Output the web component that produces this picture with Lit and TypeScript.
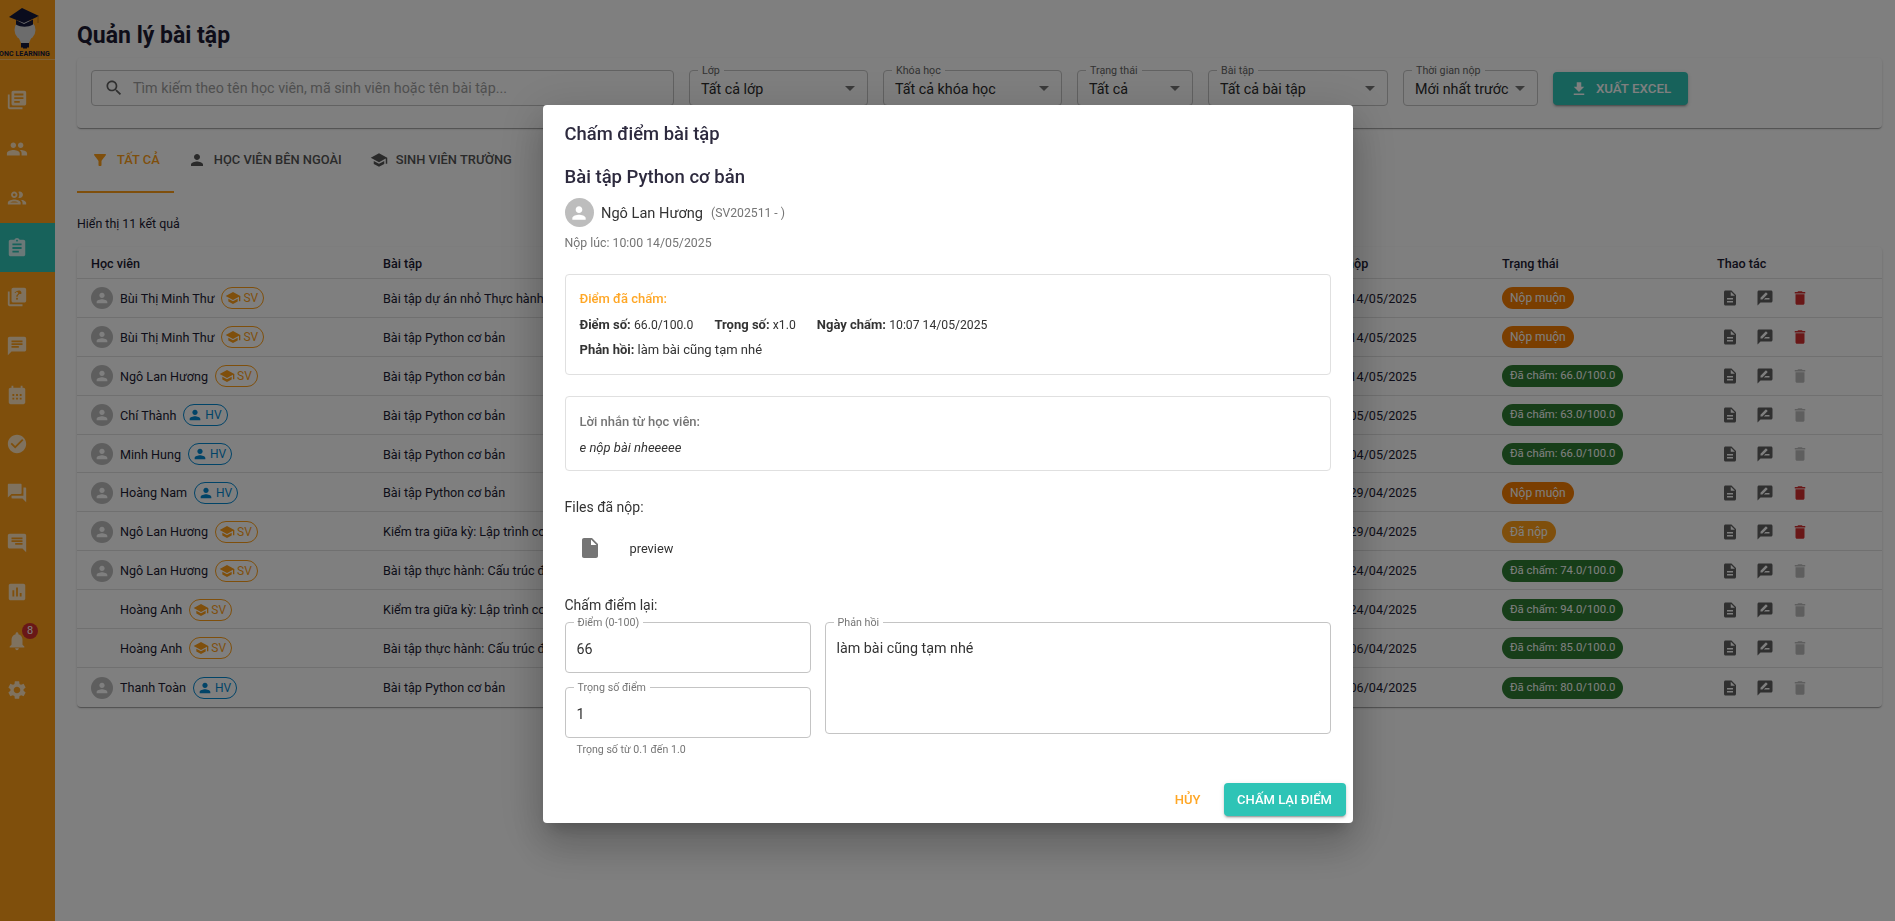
import { LitElement, css, html, svg } from "lit";
import { customElement } from "lit/decorators.js";
import { classMap } from "lit/directives/class-map.js";

const P = {
  books: "M4 6H2v14c0 1.1.9 2 2 2h14v-2H4V6zm16-4H8c-1.1 0-2 .9-2 2v12c0 1.1.9 2 2 2h12c1.1 0 2-.9 2-2V4c0-1.1-.9-2-2-2zm-1 9H9V9h10v2zm-4 4H9v-2h6v2zm4-8H9V5h10v2z",
  people: "M16 11c1.66 0 2.99-1.34 2.99-3S17.66 5 16 5c-1.66 0-3 1.34-3 3s1.34 3 3 3zm-8 0c1.66 0 2.99-1.34 2.99-3S9.66 5 8 5C6.34 5 5 6.34 5 8s1.34 3 3 3zm0 2c-2.33 0-7 1.17-7 3.5V19h14v-2.5c0-2.33-4.67-3.5-7-3.5zm8 0c-.29 0-.62.02-.97.05 1.16.84 1.97 1.97 1.97 3.45V19h6v-2.5c0-2.33-4.67-3.5-7-3.5z",
  peopleOutline: "M9 13.75c-2.34 0-7 1.17-7 3.5V19h14v-1.75c0-2.33-4.66-3.5-7-3.5zM4.34 17c.84-.58 2.87-1.25 4.66-1.25s3.82.67 4.66 1.25H4.34zM9 12c1.93 0 3.5-1.57 3.5-3.5S10.93 5 9 5 5.5 6.57 5.5 8.5 7.07 12 9 12zm0-5c.83 0 1.5.67 1.5 1.5S9.83 10 9 10s-1.5-.67-1.5-1.5S8.17 7 9 7zm7.04 6.81c1.16.84 1.96 1.96 1.96 3.44V19h4v-1.75c0-2.02-3.5-3.17-5.96-3.44zM15 12c1.93 0 3.5-1.57 3.5-3.5S16.93 5 15 5c-.54 0-1.04.13-1.5.35.63.89 1 1.98 1 3.15s-.37 2.26-1 3.15c.46.22.96.35 1.5.35z",
  assignment: "M19 3h-4.18C14.4 1.84 13.3 1 12 1c-1.3 0-2.4.84-2.82 2H5c-1.1 0-2 .9-2 2v14c0 1.1.9 2 2 2h14c1.1 0 2-.9 2-2V5c0-1.1-.9-2-2-2zm-7 0c.55 0 1 .45 1 1s-.45 1-1 1-1-.45-1-1 .45-1 1-1zm2 14H7v-2h7v2zm3-4H7v-2h10v2zm0-4H7V7h10v2z",
  quiz: "M4 6H2v14c0 1.1.9 2 2 2h14v-2H4V6zm16-4H8c-1.1 0-2 .9-2 2v12c0 1.1.9 2 2 2h12c1.1 0 2-.9 2-2V4c0-1.1-.9-2-2-2zm-7.99 13c-.59 0-1.05-.47-1.05-1.05 0-.59.47-1.04 1.05-1.04.59 0 1.04.45 1.04 1.04 0 .58-.44 1.05-1.04 1.05zm2.5-6.17c-.63.93-1.23 1.21-1.56 1.81-.13.24-.18.4-.18 1.18h-1.52c0-.41-.06-1.08.26-1.65.41-.73 1.18-1.16 1.63-1.8.48-.68.21-1.94-1.14-1.94-.88 0-1.32.67-1.5 1.23l-1.37-.57C11.51 5.96 12.52 5 13.99 5c1.23 0 2.08.56 2.51 1.26.37.61.58 1.73.01 2.57z",
  chat: "M20 2H4c-1.1 0-1.99.9-1.99 2L2 22l4-4h14c1.1 0 2-.9 2-2V4c0-1.1-.9-2-2-2zM6 9h12v2H6V9zm8 5H6v-2h8v2zm4-6H6V6h12v2z",
  calendar: "M19 4h-1V2h-2v2H8V2H6v2H5c-1.1 0-2 .9-2 2v14c0 1.1.9 2 2 2h14c1.1 0 2-.9 2-2V6c0-1.1-.9-2-2-2zM9 17H7v-2h2v2zm0-4H7v-2h2v2zm4 4h-2v-2h2v2zm0-4h-2v-2h2v2zm4 4h-2v-2h2v2zm0-4h-2v-2h2v2z",
  check: "M12 2C6.48 2 2 6.48 2 12s4.48 10 10 10 10-4.48 10-10S17.52 2 12 2zm-2 15l-5-5 1.41-1.41L10 14.17l7.59-7.59L19 8l-9 9z",
  forum: "M21 6h-2v9H6v2c0 .55.45 1 1 1h11l4 4V7c0-.55-.45-1-1-1zm-4 6V3c0-.55-.45-1-1-1H3c-.55 0-1 .45-1 1v14l4-4h10c.55 0 1-.45 1-1z",
  chart: "M19 3H5c-1.1 0-2 .9-2 2v14c0 1.1.9 2 2 2h14c1.1 0 2-.9 2-2V5c0-1.1-.9-2-2-2zM9 17H7v-7h2v7zm4 0h-2V7h2v10zm4 0h-2v-4h2v4z",
  bell: "M12 22c1.1 0 2-.9 2-2h-4c0 1.1.89 2 2 2zm6-6v-5c0-3.07-1.64-5.64-4.5-6.32V4c0-.83-.67-1.5-1.5-1.5s-1.5.67-1.5 1.5v.68C7.63 5.36 6 7.92 6 11v5l-2 2v1h16v-1l-2-2z",
  settings: "M19.14 12.94c.04-.3.06-.61.06-.94 0-.32-.02-.64-.07-.94l2.03-1.58c.18-.14.23-.41.12-.61l-1.92-3.32c-.12-.22-.37-.29-.59-.22l-2.39.96c-.5-.38-1.03-.7-1.62-.94l-.36-2.54c-.04-.24-.24-.41-.48-.41h-3.84c-.24 0-.43.17-.47.41l-.36 2.54c-.59.24-1.13.57-1.62.94l-2.39-.96c-.22-.08-.47 0-.59.22L2.74 8.87c-.12.21-.08.47.12.61l2.03 1.58c-.05.3-.09.63-.09.94s.02.64.07.94l-2.03 1.58c-.18.14-.23.41-.12.61l1.92 3.32c.12.22.37.29.59.22l2.39-.96c.5.38 1.03.7 1.62.94l.36 2.54c.05.24.24.41.48.41h3.84c.24 0 .44-.17.47-.41l.36-2.54c.59-.24 1.13-.56 1.62-.94l2.39.96c.22.08.47 0 .59-.22l1.92-3.32c.12-.22.07-.47-.12-.61l-2.01-1.58zM12 15.6c-1.98 0-3.6-1.62-3.6-3.6s1.62-3.6 3.6-3.6 3.6 1.62 3.6 3.6-1.62 3.6-3.6 3.6z",
  search: "M15.5 14h-.79l-.28-.27C15.41 12.59 16 11.11 16 9.5 16 5.91 13.09 3 9.5 3S3 5.91 3 9.5 5.91 16 9.5 16c1.61 0 3.09-.59 4.23-1.57l.27.28v.79l5 4.99L20.49 19l-4.99-5zm-6 0C7.01 14 5 11.99 5 9.5S7.01 5 9.5 5 14 7.01 14 9.5 11.99 14 9.5 14z",
  filter: "M4.25 5.61C6.27 8.2 10 13 10 13v6c0 .55.45 1 1 1h2c.55 0 1-.45 1-1v-6s3.72-4.8 5.74-7.39c.51-.66.04-1.61-.79-1.61H5.04c-.83 0-1.3.95-.79 1.61z",
  person: "M12 12c2.21 0 4-1.79 4-4s-1.79-4-4-4-4 1.79-4 4 1.79 4 4 4zm0 2c-2.67 0-8 1.34-8 4v2h16v-2c0-2.66-5.33-4-8-4z",
  school: "M5 13.18v4L12 21l7-3.82v-4L12 17l-7-3.82zM12 3L1 9l11 6 9-4.91V17h2V9L12 3z",
  download: "M5 20h14v-2H5v2zM19 9h-4V3H9v6H5l7 7 7-7z",
  description: "M14 2H6c-1.1 0-1.99.9-1.99 2L4 20c0 1.1.89 2 2 2h12c1.1 0 2-.9 2-2V8l-6-6zm2 16H8v-2h8v2zm0-4H8v-2h8v2zm-3-5V3.5L18.5 9H13z",
  file: "M6 2c-1.1 0-1.99.9-1.99 2L4 20c0 1.1.89 2 2 2h12c1.1 0 2-.9 2-2V8l-6-6H6zm7 7V3.5L18.5 9H13z",
  review: "M20 2H4c-1.1 0-1.99.9-1.99 2L2 22l4-4h14c1.1 0 2-.9 2-2V4c0-1.1-.9-2-2-2zM6 14v-2.47l6.88-6.88c.2-.2.51-.2.71 0l1.77 1.77c.2.2.2.51 0 .71L8.47 14H6zm12 0h-7.5l2-2H18v2z",
  trash: "M6 19c0 1.1.9 2 2 2h8c1.1 0 2-.9 2-2V7H6v12zM19 4h-3.5l-1-1h-5l-1 1H5v2h14V4z",
  arrow: "M7 10l5 5 5-5z",
};

const icon = (d: string, size = 24, flip = false) => html`<svg
  class=${flip ? "flip" : ""}
  width=${size}
  height=${size}
  viewBox="0 0 24 24"
  fill="currentColor"
>${svg`<path d=${d}></path>`}</svg>`;

const NAV = [
  { d: P.books },
  { d: P.people },
  { d: P.peopleOutline },
  { d: P.assignment, active: true },
  { d: P.quiz },
  { d: P.chat },
  { d: P.calendar },
  { d: P.check },
  { d: P.forum },
  { d: P.chat, flip: true },
  { d: P.chart },
  { d: P.bell, badge: "8" },
  { d: P.settings },
];

const FILTERS = [
  { label: "Lớp", value: "Tất cả lớp", width: 179 },
  { label: "Khóa học", value: "Tất cả khóa học", width: 179 },
  { label: "Trạng thái", value: "Tất cả", width: 116 },
  { label: "Bài tập", value: "Tất cả bài tập", width: 180 },
  { label: "Thời gian nộp", value: "Mới nhất trước", width: 135 },
];

const TABS = [
  { d: P.filter, label: "Tất cả", active: true },
  { d: P.person, label: "Học viên bên ngoài" },
  { d: P.school, label: "Sinh viên trường" },
];

const PY = "Bài tập Python cơ bản";
const MID = "Kiểm tra giữa kỳ: Lập trình cơ bản";
const PRAC = "Bài tập thực hành: Cấu trúc điều khiển";
const LATE = { text: "Nộp muộn", kind: "late" };
const graded = (n: string) => ({ text: `Đã chấm: ${n}/100.0`, kind: "graded" });

const ROWS = [
  { name: "Bùi Thị Minh Thư", type: "SV", task: "Bài tập dự án nhỏ Thực hành Python", date: "10:20 14/05/2025", status: LATE, del: true },
  { name: "Bùi Thị Minh Thư", type: "SV", task: PY, date: "10:12 14/05/2025", status: LATE, del: true },
  { name: "Ngô Lan Hương", type: "SV", task: PY, date: "10:00 14/05/2025", status: graded("66.0") },
  { name: "Chí Thành", type: "HV", task: PY, date: "09:41 05/05/2025", status: graded("63.0") },
  { name: "Minh Hung", type: "HV", task: PY, date: "16:05 04/05/2025", status: graded("66.0") },
  { name: "Hoàng Nam", type: "HV", task: PY, date: "20:30 29/04/2025", status: LATE, del: true },
  { name: "Ngô Lan Hương", type: "SV", task: MID, date: "14:15 29/04/2025", status: { text: "Đã nộp", kind: "sent" }, del: true },
  { name: "Ngô Lan Hương", type: "SV", task: PRAC, date: "08:47 24/04/2025", status: graded("74.0") },
  { name: "Hoàng Anh", type: "SV", task: MID, date: "08:22 24/04/2025", status: graded("94.0"), noAvatar: true },
  { name: "Hoàng Anh", type: "SV", task: PRAC, date: "15:10 06/04/2025", status: graded("85.0"), noAvatar: true },
  { name: "Thanh Toàn", type: "HV", task: PY, date: "11:36 06/04/2025", status: graded("80.0") },
];

@customElement("app-root")
export class AppRoot extends LitElement {
  static styles = css`
    * {
      box-sizing: border-box;
      margin: 0;
      padding: 0;
    }

    :host {
      display: block;
      height: 100vh;
      overflow: hidden;
      font-family: Roboto, "Noto Sans", sans-serif;
      color: #1c1b33;
      background: #fff;
    }

    svg {
      display: block;
      flex: none;
    }

    .flip {
      transform: scaleX(-1);
    }

    .page {
      display: flex;
      height: 100vh;
    }

    /* sidebar */
    .sidebar {
      width: 55px;
      flex: none;
      background: #ff9f18;
      overflow: hidden;
    }

    .logo {
      height: 60px;
      border-bottom: 1px solid rgba(255, 255, 255, 0.35);
      padding-top: 3px;
    }

    .logo-text {
      font-size: 7px;
      line-height: 10px;
      font-weight: 700;
      letter-spacing: 0.1px;
      white-space: nowrap;
      margin-left: -1px;
      color: #14183a;
    }

    .nav {
      padding-top: 15.4px;
    }

    .nav-item {
      position: relative;
      height: 49.2px;
      padding-left: 6px;
      display: flex;
      align-items: center;
      color: rgba(255, 255, 255, 0.72);
    }

    .nav-item.active {
      background: #2ec4b6;
      color: rgba(255, 255, 255, 0.8);
    }

    .badge {
      position: absolute;
      left: 22px;
      top: 7px;
      width: 16px;
      height: 16px;
      border-radius: 50%;
      background: #d32f2f;
      color: #fff;
      font-size: 11px;
      line-height: 16px;
      text-align: center;
    }

    /* main */
    .main {
      flex: 1;
      min-width: 0;
      padding: 14px 13px 0 22px;
    }

    h1 {
      font-size: 23px;
      line-height: 44px;
      font-weight: 700;
    }

    .filter-card {
      display: flex;
      gap: 15px;
      height: 70px;
      padding: 12px 14px;
      border-radius: 4px;
      box-shadow: 0 2px 1px -1px rgba(0, 0, 0, 0.2), 0 1px 1px rgba(0, 0, 0, 0.14), 0 1px 3px rgba(0, 0, 0, 0.12);
    }

    .search {
      width: 583px;
      height: 36px;
      display: flex;
      align-items: center;
      gap: 9px;
      padding-left: 12px;
      border: 1px solid #c4c4c4;
      border-radius: 4px;
      color: #616161;
    }

    .search span {
      font-size: 14.3px;
      color: #9e9e9e;
      white-space: nowrap;
    }

    .select {
      position: relative;
      height: 36px;
      display: flex;
      align-items: center;
      justify-content: space-between;
      padding: 2px 5px 0 11px;
      border: 1px solid #c4c4c4;
      border-radius: 4px;
      font-size: 14.3px;
      color: #2b2b2b;
      white-space: nowrap;
    }

    .select label {
      position: absolute;
      left: 8px;
      top: -7px;
      padding: 0 4px;
      background: #fff;
      font-size: 10.7px;
      line-height: 13px;
      color: #666;
    }

    .select svg {
      color: #757575;
      margin-top: -2px;
    }

    .export {
      width: 135px;
      height: 33px;
      margin-top: 2px;
      display: flex;
      align-items: center;
      justify-content: center;
      gap: 8px;
      border-radius: 4px;
      background: #2ec4b6;
      color: #fff;
      font-size: 13.3px;
      font-weight: 500;
      box-shadow: 0 3px 1px -2px rgba(0, 0, 0, 0.2), 0 2px 2px rgba(0, 0, 0, 0.14), 0 1px 5px rgba(0, 0, 0, 0.12);
    }

    .tabs {
      display: flex;
      margin-top: 8px;
    }

    .tab {
      height: 57px;
      display: flex;
      align-items: flex-start;
      gap: 8px;
      padding: 14px 14px 0;
      font-size: 12.9px;
      line-height: 20px;
      font-weight: 500;
      text-transform: uppercase;
      color: #555;
      white-space: nowrap;
    }

    .tab svg {
      margin-top: 1px;
    }

    .tab.active {
      color: #ff9f18;
      border-bottom: 2px solid #ff9f18;
    }

    .count {
      margin-top: 21px;
      font-size: 12.4px;
      line-height: 20px;
    }

    .table {
      margin-top: 13px;
      border-radius: 4px;
      box-shadow: 0 2px 1px -1px rgba(0, 0, 0, 0.2), 0 1px 1px rgba(0, 0, 0, 0.14), 0 1px 3px rgba(0, 0, 0, 0.12);
      font-size: 12.6px;
      overflow: hidden;
    }

    .row {
      display: grid;
      grid-template-columns: 292px 932px 187px 215px 1fr;
      align-items: center;
      height: 38.9px;
      padding: 1px 0 0 14px;
      border-bottom: 1px solid #e0e0e0;
      white-space: nowrap;
    }

    .row.head {
      height: 32px;
      padding-top: 2px;
      font-weight: 500;
    }

    .row:last-child {
      border-bottom: 0;
    }

    .student {
      display: flex;
      align-items: center;
    }

    .avatar {
      width: 22px;
      height: 22px;
      border-radius: 50%;
      background: #bdbdbd;
      color: #fff;
      display: flex;
      align-items: center;
      justify-content: center;
      flex: none;
    }

    .avatar.none {
      background: transparent;
    }

    .student-name {
      margin-left: 7px;
    }

    .pill {
      display: flex;
      align-items: center;
      gap: 2px;
      height: 22px;
      margin-left: 7px;
      padding: 0 5px 0 3px;
      border: 1px solid;
      border-radius: 11px;
      font-size: 12px;
    }

    .pill.SV {
      color: #ff9f18;
    }

    .pill.HV {
      color: #0288d1;
    }

    .status {
      display: inline-block;
      height: 22px;
      padding: 0 8px;
      border-radius: 11px;
      font-size: 12px;
      line-height: 22px;
      color: #fff;
    }

    .status.late {
      background: #f57c00;
    }

    .status.graded {
      background: #2e7d32;
      font-size: 11.3px;
    }

    .status.sent {
      background: #ff9f18;
    }

    .actions {
      display: flex;
      gap: 17px;
      padding-left: 4px;
      color: #616161;
    }

    .actions .del {
      color: #d32f2f;
    }

    .actions .off {
      color: #bdbdbd;
    }

    /* dialog */
    .backdrop {
      position: fixed;
      inset: 0;
      display: flex;
      justify-content: center;
      align-items: flex-start;
      padding-top: 105px;
      background: rgba(0, 0, 0, 0.5);
    }

    .modal {
      width: 810px;
      padding: 14px 7px 7px 22px;
      border-radius: 4px;
      background: #fff;
      color: #333;
      box-shadow: 0 11px 15px -7px rgba(0, 0, 0, 0.2), 0 24px 38px 3px rgba(0, 0, 0, 0.14), 0 9px 46px 8px rgba(0, 0, 0, 0.12);
    }

    .body {
      width: 766px;
    }

    h2 {
      font-size: 18.4px;
      line-height: 30px;
      font-weight: 500;
      color: #2d2a3e;
    }

    h3 {
      margin-top: 15px;
      font-size: 18.5px;
      line-height: 26px;
      font-weight: 500;
      color: #2d2a3e;
    }

    .who {
      display: flex;
      align-items: center;
      margin-top: 8px;
      font-size: 14.6px;
    }

    .who .avatar {
      width: 29px;
      height: 29px;
    }

    .who-name {
      margin-left: 7.5px;
    }

    .who-code {
      margin-left: 8px;
      font-size: 12.2px;
      color: #757575;
    }

    .submitted {
      margin-top: 7px;
      font-size: 12.3px;
      line-height: 18px;
      color: #757575;
    }

    .box {
      border: 1px solid #e0e0e0;
      border-radius: 4px;
      padding: 15px 14px;
      font-size: 13px;
      line-height: 18px;
    }

    .box.graded-box {
      margin-top: 22px;
    }

    .box.note {
      margin-top: 21px;
      padding: 16px 14px 13px;
    }

    .box-title {
      font-weight: 500;
      color: #ffa726;
    }

    .box-line {
      display: flex;
      margin-top: 8px;
      gap: 21px;
    }

    .box-line + .box-line {
      margin-top: 7px;
    }

    .box-line b {
      font-weight: 700;
    }

    .num {
      font-size: 12.2px;
    }

    .note-title {
      font-weight: 500;
      color: #757575;
    }

    .note-text {
      margin-top: 8px;
      font-style: italic;
    }

    .label {
      font-size: 14px;
      line-height: 20px;
    }

    .label.files {
      margin-top: 26px;
    }

    .label.regrade {
      margin-top: 35px;
    }

    .file {
      display: flex;
      align-items: center;
      gap: 28px;
      margin: 19px 0 0 13px;
      font-size: 12.8px;
      color: #757575;
    }

    .file span {
      color: #333;
    }

    .grade {
      display: grid;
      grid-template-columns: 246px 1fr;
      gap: 14px;
      margin-top: 7px;
    }

    .grade-left {
      display: flex;
      flex-direction: column;
      gap: 14px;
    }

    .field {
      position: relative;
      height: 51px;
      padding: 16px 11px 0;
      border: 1px solid #c4c4c4;
      border-radius: 4px;
      font-size: 14.3px;
      line-height: 20px;
    }

    .field.area {
      height: 112px;
      padding-top: 15px;
    }

    .field label {
      position: absolute;
      left: 8px;
      top: -7px;
      padding: 0 4px;
      background: #fff;
      font-size: 10.7px;
      line-height: 13px;
      color: #757575;
    }

    .hint {
      margin: -9px 0 0 12px;
      font-size: 10.6px;
      line-height: 14px;
      color: #757575;
    }

    .footer {
      display: flex;
      justify-content: flex-end;
      align-items: center;
      gap: 15px;
      margin-top: 26px;
    }

    .cancel {
      padding: 0 8px;
      font-size: 13px;
      font-weight: 500;
      color: #ffa726;
    }

    .submit {
      width: 122px;
      height: 33px;
      border-radius: 4px;
      background: #2ec4b6;
      color: #fff;
      font-size: 13px;
      line-height: 33px;
      font-weight: 500;
      text-align: center;
      box-shadow: 0 3px 1px -2px rgba(0, 0, 0, 0.2), 0 2px 2px rgba(0, 0, 0, 0.14), 0 1px 5px rgba(0, 0, 0, 0.12);
    }
  `;

  private _renderLogo() {
    return html`<svg width="55" height="46" viewBox="0 0 55 46">
      <circle cx="25" cy="27" r="10.5" fill="#d9d9d9"></circle>
      <path d="M18 33l3 7h8l3-7z" fill="#d9d9d9"></path>
      <path d="M21 40h8v4.5h-2v1h-4v-1h-2z" fill="#14183a"></path>
      <path d="M9 14L22 5l17 8-15 7z" fill="#14183a"></path>
      <path d="M16 17l8 4 9-4.500v5c-5 3-12 3-17 0z" fill="#14183a"></path>
      <path d="M38 13v7" stroke="#b9791a" stroke-width="1" fill="none"></path>
    </svg>`;
  }

  private _renderRow(r: (typeof ROWS)[number]) {
    return html`<div class="row">
      <div class="student">
        <span class=${classMap({ avatar: true, none: !!r.noAvatar })}>
          ${r.noAvatar ? "" : icon(P.person, 16)}
        </span>
        <span class="student-name">${r.name}</span>
        <span class="pill ${r.type}">
          ${icon(r.type === "SV" ? P.school : P.person, 16)}${r.type}
        </span>
      </div>
      <div>${r.task}</div>
      <div>${r.date}</div>
      <div><span class="status ${r.status.kind}">${r.status.text}</span></div>
      <div class="actions">
        ${icon(P.description, 18)} ${icon(P.review, 18)}
        <span class=${r.del ? "del" : "off"}>${icon(P.trash, 18)}</span>
      </div>
    </div>`;
  }

  private _renderModal() {
    return html`<div class="backdrop">
      <div class="modal">
        <div class="body">
          <h2>Chấm điểm bài tập</h2>
          <h3>Bài tập Python cơ bản</h3>
          <div class="who">
            <span class="avatar">${icon(P.person, 20)}</span>
            <span class="who-name">Ngô Lan Hương</span>
            <span class="who-code">(SV202511 - )</span>
          </div>
          <div class="submitted">Nộp lúc: 10:00 14/05/2025</div>
          <div class="box graded-box">
            <div class="box-title">Điểm đã chấm:</div>
            <div class="box-line">
              <span><b>Điểm số:</b> <span class="num">66.0/100.0</span></span>
              <span><b>Trọng số:</b> <span class="num">x1.0</span></span>
              <span><b>Ngày chấm:</b> <span class="num">10:07 14/05/2025</span></span>
            </div>
            <div class="box-line"><span><b>Phản hồi:</b> làm bài cũng tạm nhé</span></div>
          </div>
          <div class="box note">
            <div class="note-title">Lời nhắn từ học viên:</div>
            <div class="note-text">e nộp bài nheeeee</div>
          </div>
          <div class="label files">Files đã nộp:</div>
          <div class="file">${icon(P.file, 24)}<span>preview</span></div>
          <div class="label regrade">Chấm điểm lại:</div>
          <div class="grade">
            <div class="grade-left">
              <div class="field"><label>Điểm (0-100)</label>66</div>
              <div class="field"><label>Trọng số điểm</label>1</div>
              <div class="hint">Trọng số từ 0.1 đến 1.0</div>
            </div>
            <div class="field area"><label>Phản hồi</label>làm bài cũng tạm nhé</div>
          </div>
        </div>
        <div class="footer">
          <span class="cancel">HỦY</span>
          <span class="submit">CHẤM LẠI ĐIỂM</span>
        </div>
      </div>
    </div>`;
  }

  protected render() {
    return html`
      <div class="page">
        <aside class="sidebar">
          <div class="logo">
            ${this._renderLogo()}
            <div class="logo-text">ONC LEARNING</div>
          </div>
          <nav class="nav">
            ${NAV.map(
              (n) => html`<div class=${classMap({ "nav-item": true, active: !!n.active })}>
                ${icon(n.d, 22, !!n.flip)}
                ${n.badge ? html`<span class="badge">${n.badge}</span>` : ""}
              </div>`
            )}
          </nav>
        </aside>
        <main class="main">
          <h1>Quản lý bài tập</h1>
          <section class="filter-card">
            <div class="search">
              ${icon(P.search, 20)}
              <span>Tìm kiếm theo tên học viên, mã sinh viên hoặc tên bài tập...</span>
            </div>
            ${FILTERS.map(
              (f) => html`<div class="select" style="width:${f.width}px">
                <label>${f.label}</label>
                <span>${f.value}</span>
                ${icon(P.arrow, 24)}
              </div>`
            )}
            <div class="export">${icon(P.download, 18)}XUẤT EXCEL</div>
          </section>
          <div class="tabs">
            ${TABS.map(
              (t) => html`<div class=${classMap({ tab: true, active: !!t.active })}>
                ${icon(t.d, 18)}${t.label}
              </div>`
            )}
          </div>
          <div class="count">Hiển thị 11 kết quả</div>
          <section class="table">
            <div class="row head">
              <div>Học viên</div>
              <div>Bài tập</div>
              <div>Ngày nộp</div>
              <div>Trạng thái</div>
              <div>Thao tác</div>
            </div>
            ${ROWS.map((r) => this._renderRow(r))}
          </section>
        </main>
      </div>
      ${this._renderModal()}
    `;
  }
}
